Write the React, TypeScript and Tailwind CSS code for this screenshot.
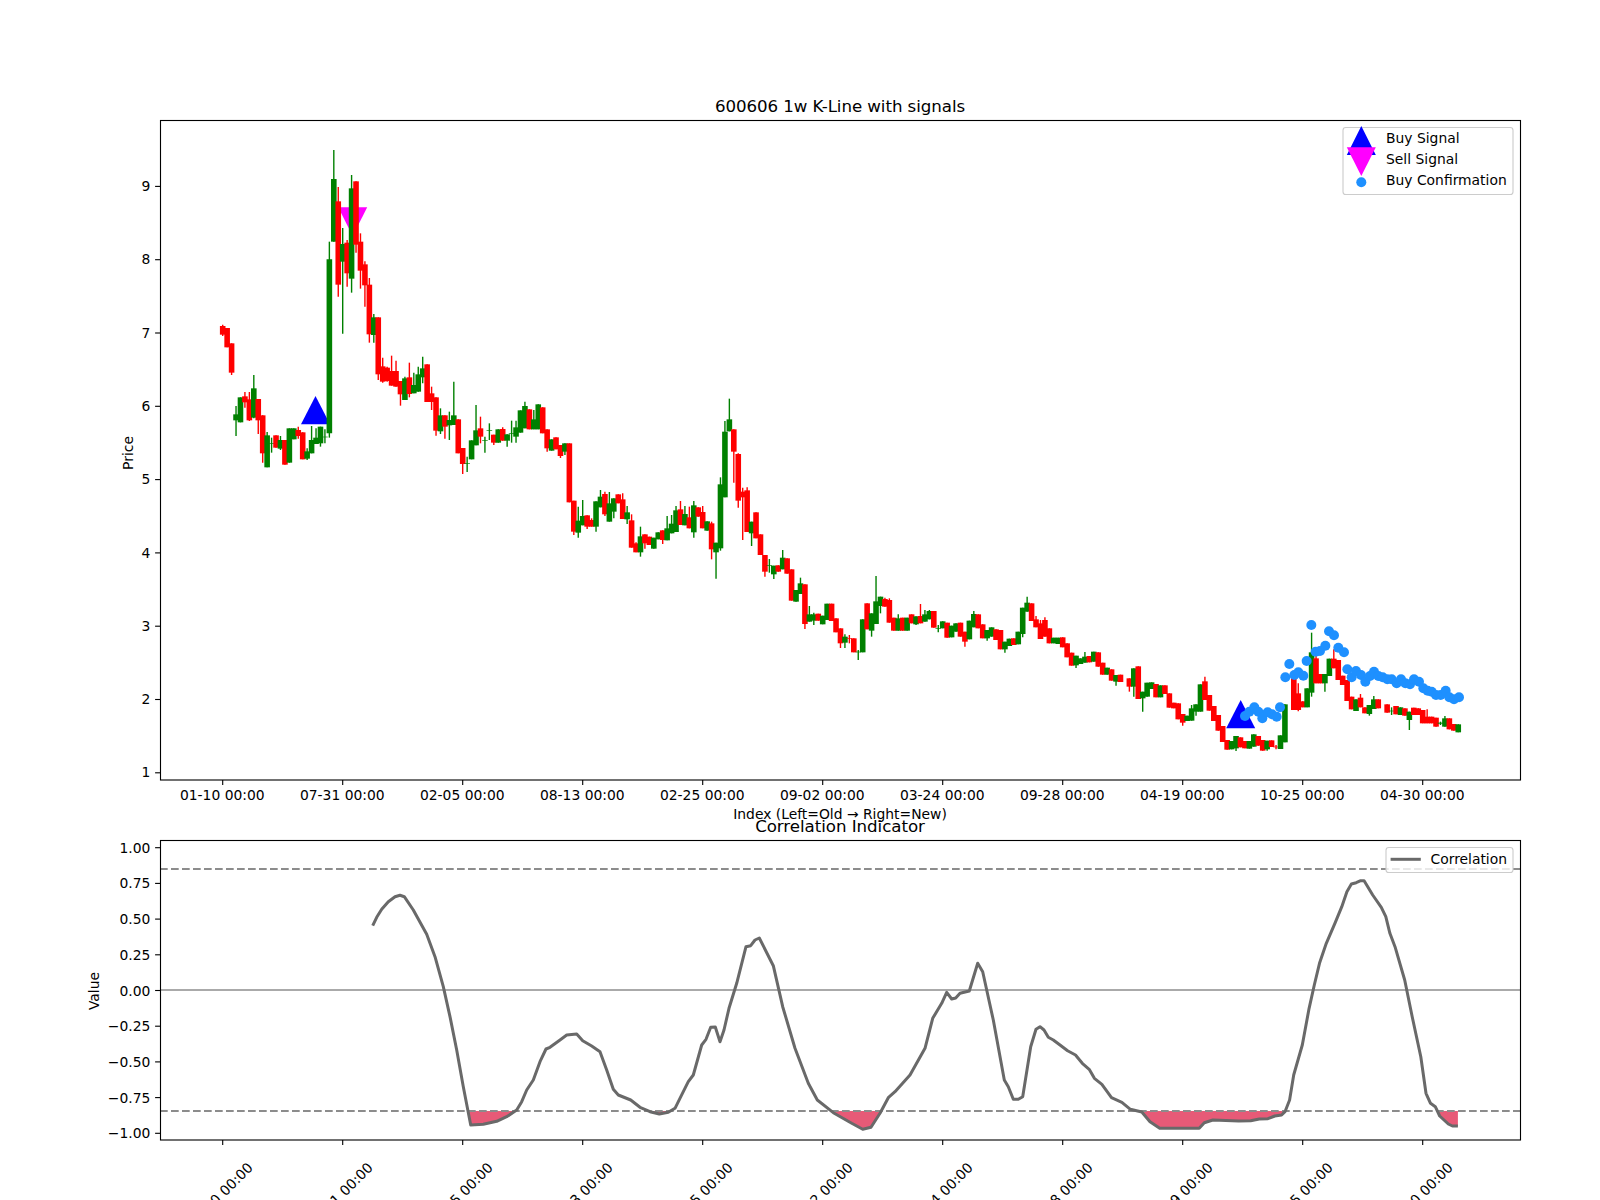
import * as React from "react"

type Candle = ["r" | "g", number, number, number?, number?] | null

const COLORS = { r: "#ff0000", g: "#008000" }
const X_LABELS = ["01-10", "07-31", "02-05", "08-13", "02-25", "09-02", "03-24", "09-28", "04-19", "10-25", "04-30"]
const PRICE_TICKS = [9, 8, 7, 6, 5, 4, 3, 2, 1]
const VALUE_TICKS = ["1.00", "0.75", "0.50", "0.25", "0.00", "−0.25", "−0.50", "−0.75", "−1.00"]

const tickX = (k: number) => 222.7 + 120 * k
const candleX = (i: number) => 222.7 + (i * 120) / 27
const priceY = (p: number) => 186.4 + (9 - p) * 73.3
const valueY = (v: number) => 990.5 - 142.8 * v

// Each block was sampled at 3x from a different window, so y = top + value / 3
const CANDLE_BLOCKS: { top: number; rows: Candle[] }[] = [
  {
    top: 90,
    rows: [
      ["r", 708, 734, 704, 738], ["r", 714, 772], ["r", 760, 848, 760, 855], ["g", 973, 991, 948, 1038],
      ["g", 922, 997], ["r", 919, 937, 906, 953], ["r", 928, 991, 906, 993], ["g", 895, 983, 855, 985],
      ["r", 927, 991, 927, 1032], ["r", 976, 1090, 976, 1118], ["g", 1036, 1132, 1026, 1132], ["g", 1060, 1062, 1043, 1088],
      ["r", 1036, 1073], ["g", 1050, 1076, 1038, 1080], ["r", 1050, 1124], ["g", 1015, 1118],
      ["g", 1015, 1048], ["r", 1020, 1038, 1010, 1046], ["r", 1027, 1108], ["g", 1084, 1106, 1075, 1110],
      ["g", 1050, 1090, 1008, 1090], ["g", 1043, 1062, 1015, 1062], ["g", 1010, 1060, 1010, 1070], ["g", 1040, 1042, 1018, 1060],
      ["g", 508, 1030, 455, 1043], ["g", 267, 455, 180, 455], ["r", 334, 584, 291, 620], ["g", 462, 515, 414, 731],
      ["r", 458, 550, 450, 590], ["g", 295, 566, 255, 608], ["r", 274, 464, 274, 488], ["r", 455, 542, 430, 596],
      ["r", 523, 586, 514, 650], ["r", 584, 733, 564, 758], ["g", 682, 735, 672, 758], ["r", 682, 853, 682, 870],
      ["r", 829, 875, 803, 878], ["r", 833, 873, 830, 875], ["r", 843, 887, 797, 887], ["r", 843, 890, 812, 890],
      ["r", 873, 913, 873, 947], ["g", 865, 930, 860, 930], ["r", 862, 912, 818, 922], ["g", 885, 910, 848, 910],
      ["g", 853, 905, 830, 905], ["g", 835, 862, 800, 880], ["r", 823, 936], ["r", 910, 936, 890, 960],
      ["r", 922, 1022, 922, 1037], ["g", 976, 1024, 955, 1032], ["r", 976, 1010, 976, 1046], ["g", 990, 1006, 965, 1050],
      ["g", 976, 1005, 875, 1005], ["r", 988, 1090], ["r", 1074, 1122, 1074, 1152], ["g", 1120, 1122, 1100, 1146],
      ["g", 1051, 1108], ["g", 1021, 1066, 945, 1066], ["r", 1015, 1040, 980, 1060], ["g", 1050, 1052, 1040, 1088],
      ["g", 1020, 1022, 1000, 1050], ["r", 1034, 1058, 1034, 1065], ["g", 1018, 1058], ["r", 1017, 1052, 1012, 1052],
      ["g", 1033, 1052, 1033, 1070], ["g", 1030, 1032, 992, 1058], ["g", 1012, 1040, 992, 1058], ["g", 961, 1028],
      ["g", 948, 1015, 935, 1015], ["r", 958, 1018], ["g", 988, 1018, 960, 1018], ["g", 943, 1018],
      ["r", 952, 1030], ["r", 1018, 1075, 1018, 1085],
    ],
  },
  {
    top: 380,
    rows: [
      ["g", 178, 212], ["r", 172, 208], ["r", 195, 228, 195, 234], ["g", 190, 215, 190, 225],
      ["r", 190, 367], ["r", 362, 455, 362, 465], ["g", 422, 458, 380, 473], ["g", 408, 436, 360, 436],
      ["r", 406, 440, 406, 447], ["r", 420, 440, 415, 440], ["g", 364, 440, 364, 455], ["g", 350, 382, 330, 382],
      ["r", 342, 403, 335, 408], ["g", 370, 425, 336, 425], ["g", 355, 395, 355, 415], ["r", 343, 370],
      ["r", 358, 417, 340, 417], ["g", 397, 418, 378, 432], ["r", 421, 503, 403, 503], ["r", 490, 517, 487, 517],
      ["g", 469, 517, 440, 530], ["r", 463, 490, 463, 506], ["r", 470, 495], ["g", 473, 506],
      ["g", 457, 478], ["r", 451, 480, 451, 492], ["g", 445, 481, 408, 481], ["g", 431, 460, 405, 460],
      ["g", 391, 456, 378, 456], ["r", 388, 435, 363, 435], ["g", 402, 436, 378, 436], ["r", 412, 445, 380, 445],
      ["g", 376, 457, 363, 473], ["r", 382, 410], ["r", 396, 445, 378, 445], ["g", 424, 452],
      ["r", 430, 508, 425, 538], ["g", 488, 517, 488, 596], ["g", 313, 505, 292, 512], ["g", 155, 352, 123, 352],
      ["g", 118, 154, 56, 154], ["r", 148, 215, 148, 308], ["r", 222, 362, 220, 383], ["r", 335, 352, 323, 480],
      ["r", 331, 456, 322, 456], ["g", 425, 460, 425, 498], ["r", 397, 475], ["r", 463, 525],
      ["r", 525, 575, 525, 590], ["g", 555, 557, 537, 578], ["g", 557, 583, 557, 597], ["r", 556, 575],
      ["g", 533, 568, 510, 568], ["r", 535, 581], ["r", 568, 662], ["g", 630, 665],
      ["g", 610, 642, 593, 642], ["r", 613, 732, 613, 747], ["g", 703, 725, 678, 725], ["g", 703, 722, 698, 735],
      ["r", 701, 722], ["g", 707, 733], ["g", 671, 720], ["r", 671, 723],
      ["r", 715, 757], ["r", 745, 790, 745, 804], ["g", 770, 788, 763, 804], ["r", 775, 777, 765, 790],
      ["r", 775, 817], ["g", 815, 817, 810, 840], ["g", 718, 817], ["r", 670, 748],
      ["g", 700, 752, 700, 770], ["g", 664, 732, 588, 732], ["g", 650, 678, 650, 700], ["r", 657, 680, 653, 680],
      ["r", 660, 728, 655, 728], ["r", 713, 752], ["g", 715, 752, 703, 752], ["r", 713, 752],
      ["g", 713, 752], ["r", 703, 730], ["g", 709, 733, 709, 735], ["r", 708, 730, 672, 730],
      ["g", 703, 725, 690, 725], ["g", 693, 718, 690, 718], ["r", 693, 743], ["g", 745, 747, 735, 757],
      ["g", 724, 745], ["r", 728, 773],
    ],
  },
  {
    top: 540,
    rows: [
      ["g", 257, 292], ["g", 250, 275], ["r", 248, 290], ["r", 275, 305, 275, 320],
      ["g", 242, 298], ["g", 222, 262, 213, 262], ["r", 223, 265], ["r", 253, 295],
      ["g", 270, 295, 270, 302], ["g", 262, 290], ["r", 268, 300], ["r", 270, 328],
      ["g", 305, 328, 305, 338], ["g", 296, 318], ["r", 295, 315], ["g", 275, 313],
      ["g", 203, 282, 203, 292], ["g", 188, 215, 170, 215], ["r", 190, 243], ["r", 238, 262, 228, 262],
      ["r", 250, 297, 240, 297], ["r", 240, 290, 232, 290], ["r", 265, 310], ["g", 293, 310],
      ["g", 293, 312], ["r", 292, 322], ["r", 310, 352], ["r", 338, 377],
      ["g", 347, 376, 347, 384], ["g", 355, 372], ["g", 350, 368, 336, 368], ["r", 348, 367],
      ["g", 335, 365], ["r", 337, 380], ["r", 368, 404], ["g", 383, 404],
      ["r", 388, 422], ["g", 405, 425, 405, 437], ["r", 404, 426], null,
      ["r", 415, 440, 415, 455], ["g", 385, 440, 385, 470], ["r", 379, 477], ["g", 455, 475, 455, 515],
      ["g", 428, 470], ["g", 427, 447], ["r", 432, 472], ["g", 436, 472],
      ["r", 436, 462], ["r", 460, 503], ["r", 488, 505], ["r", 490, 538],
      ["r", 522, 548, 522, 557], ["g", 527, 543], ["g", 505, 542, 495, 542], ["g", 493, 515, 493, 527],
      ["g", 433, 515], ["r", 424, 480, 410, 480], ["r", 465, 512], ["r", 498, 543],
      ["r", 525, 572], ["r", 558, 606], ["r", 600, 629], ["g", 603, 628],
      ["g", 588, 625, 588, 633], ["r", 592, 622], ["r", 603, 625], ["g", 603, 626],
      ["g", 583, 620], ["r", 588, 617], ["r", 600, 632], ["g", 602, 628, 602, 632],
      ["r", 601, 621], ["r", 620, 622, 615, 628], ["g", 586, 627], ["g", 493, 607],
      null,
    ],
  },
  {
    top: 600,
    rows: [
      ["r", 226, 330], ["r", 280, 330, 250, 334], ["r", 304, 322], ["g", 265, 322],
      ["g", 157, 278, 98, 290], ["r", 175, 250, 165, 250], ["r", 222, 250], ["g", 222, 250, 222, 275],
      ["g", 176, 228], ["r", 176, 205, 148, 205], ["r", 180, 240], ["r", 227, 255],
      ["r", 240, 303], ["r", 290, 328], ["g", 298, 333], ["r", 293, 322, 282, 322],
      ["r", 322, 340], ["g", 315, 342, 315, 347], ["g", 298, 327, 288, 327], ["r", 298, 325],
      null, ["r", 313, 338], ["g", 332, 334, 322, 345], ["r", 318, 343],
      ["g", 322, 345], ["r", 325, 347], ["g", 335, 360, 335, 390], ["r", 323, 345],
      ["r", 325, 345], ["r", 330, 370], ["r", 350, 370, 328, 370], ["r", 350, 370],
      ["r", 353, 380], ["g", 368, 371, 365, 375], ["g", 355, 380, 348, 380], ["r", 355, 388],
      ["r", 372, 392], ["g", 373, 397],
    ],
  },
]

const CANDLES = CANDLE_BLOCKS.flatMap((block) =>
  block.rows.map((row) => {
    if (!row) return null
    const [kind, bodyTop, bodyBottom, high = bodyTop, low = bodyBottom] = row
    return {
      color: COLORS[kind],
      bodyTop: block.top + bodyTop / 3,
      bodyBottom: block.top + bodyBottom / 3,
      high: block.top + high / 3,
      low: block.top + low / 3,
    }
  })
)

const CONFIRMATIONS = [
  [135, 348], [148, 335], [163, 322], [175, 335], [187, 355], [203, 337], [216, 343], [230, 350], [240, 322],
  [256, 232], [268, 192], [283, 225], [295, 217], [310, 227], [320, 183], [334, 75], [347, 155], [360, 153],
  [376, 137], [387, 94], [402, 106], [415, 143], [432, 157], [442, 208], [455, 232], [468, 213], [483, 225],
  [496, 245], [510, 228], [522, 215], [535, 228], [548, 232], [562, 238], [575, 238], [590, 250], [603, 238],
  [616, 250], [630, 253], [642, 238], [657, 245], [670, 265], [683, 272], [695, 275], [708, 285], [722, 285],
  [737, 272], [748, 292], [762, 298], [777, 292],
].map(([x, y]) => [1200 + x / 3, 600 + y / 3])

const CORRELATION = [
  [372.7, 925.7], [376.7, 917.3], [381.7, 909.3], [388.3, 901.7], [395, 896.7], [400, 895.3], [404.3, 896.7], [413.3, 910],
  [426.7, 934.3], [435, 956.7], [443.3, 986.7], [450, 1016.7], [456.7, 1050], [463.3, 1086.7], [470.7, 1125], [483.3, 1124.3],
  [496.7, 1121.3], [506.7, 1116.7], [516.7, 1110], [521.7, 1101.7], [526.7, 1090], [533.3, 1080], [540, 1061.7], [546, 1049],
  [550, 1047.3], [560, 1040], [566.7, 1035], [576.7, 1034], [582.7, 1040.7], [591.7, 1046], [600, 1051.7], [606.7, 1070],
  [613.3, 1089.3], [618.3, 1095], [630.7, 1100], [640, 1107.3], [650, 1111.7], [659.3, 1114], [668.3, 1112.3], [675, 1108.3],
  [683.3, 1091.7], [688.3, 1081.7], [693.3, 1075], [701.7, 1045], [706, 1039.3], [710.7, 1027.3], [715.3, 1027], [720, 1041.7],
  [724, 1030], [729, 1008.3], [736.7, 983.3], [746, 946.7], [750.7, 945.7], [755, 940], [759.3, 938], [773.3, 965.7],
  [782.7, 1006.7], [795, 1048.3], [808.3, 1083.3], [817.3, 1100], [833.3, 1112.7], [851.7, 1123.3], [862.7, 1129.3], [871, 1127.3],
  [880, 1113.3], [888.3, 1097.7], [895, 1091.7], [910, 1075], [925, 1048.3], [932.7, 1018.3], [941.7, 1003.3], [946.7, 992.3],
  [951.7, 999], [955.7, 998], [960, 993.3], [969.3, 991], [977.7, 963.3], [982.7, 971.7], [993.3, 1020], [1004.3, 1080],
  [1008.3, 1086.7], [1013.3, 1099.3], [1018.3, 1099.3], [1022.7, 1096.7], [1030.7, 1046.7], [1036, 1029.3], [1040, 1026.7], [1044, 1030],
  [1048.3, 1037.3], [1053.3, 1040], [1060, 1045], [1067.6, 1050.7], [1075.5, 1055], [1082.3, 1063.3], [1089.2, 1069.3], [1094.4, 1078.3],
  [1101.9, 1084.3], [1111.5, 1097.7], [1121.9, 1102.3], [1130.4, 1109.3], [1141.8, 1112], [1150, 1121.7], [1159.7, 1128.3], [1199.2, 1128.3],
  [1204.3, 1122.7], [1212.9, 1120], [1238.7, 1121], [1250.7, 1120.7], [1259.3, 1119], [1267.9, 1118.7], [1274.8, 1116], [1281.6, 1115],
  [1285, 1111.7], [1289.6, 1100], [1293.7, 1075], [1302.3, 1045], [1309.1, 1008.3], [1314.3, 985], [1319.5, 963.3], [1326.3, 943.3],
  [1334.9, 923.3], [1341.8, 906.7], [1346.9, 891.7], [1351.4, 884], [1356.2, 882.7], [1360.7, 880.7], [1364.1, 880.7], [1372.7, 895],
  [1381.3, 907.3], [1385.8, 916.7], [1389.9, 933.3], [1395, 946.7], [1404.7, 980], [1412.2, 1016.7], [1420.8, 1056.7], [1426, 1093.3],
  [1430.5, 1103.3], [1435.3, 1106.7], [1439.7, 1116], [1448.3, 1124], [1452.4, 1126], [1457.9, 1126],
]

const linePoints = CORRELATION.map(([x, y]) => `${x},${y}`).join(" ")

function Triangle({ x, base, tip, fill }: { x: number; base: number; tip: number; fill: string }) {
  return <polygon points={`${x - 14.5},${base} ${x + 14.5},${base} ${x},${tip}`} fill={fill} />
}

function Frame({ top, bottom }: { top: number; bottom: number }) {
  return <rect x={160.5} y={top} width={1360} height={bottom - top} fill="none" stroke="#000" strokeWidth={1.11} />
}

function PriceChart() {
  return (
    <svg viewBox="0 120 1600 660" className="h-[660px] w-[1600px] shrink-0 overflow-visible">
      <Triangle x={315.5} base={424.3} tip={396} fill="#0000ff" />
      <Triangle x={1240.7} base={728.3} tip={700} fill="#0000ff" />
      <Triangle x={352.7} base={207.3} tip={236} fill="#ff00ff" />

      {CANDLES.map((candle, i) =>
        candle ? (
          <g key={i} stroke={candle.color}>
            <line x1={candleX(i)} x2={candleX(i)} y1={candle.high} y2={candle.low} strokeWidth={1.4} />
            <line x1={candleX(i)} x2={candleX(i)} y1={candle.bodyTop} y2={candle.bodyBottom} strokeWidth={5.6} />
          </g>
        ) : null
      )}

      {CONFIRMATIONS.map(([x, y], i) => (
        <circle key={i} cx={x} cy={y} r={5} fill="#1e90ff" />
      ))}

      <Frame top={120.5} bottom={780} />

      {PRICE_TICKS.map((p) => (
        <g key={p}>
          <line x1={155.1} x2={160} y1={priceY(p)} y2={priceY(p)} stroke="#000" strokeWidth={1.11} />
          <text x={150.3} y={priceY(p) + 4.6} textAnchor="end" className="text-[13.89px]">{p}</text>
        </g>
      ))}
      {X_LABELS.map((label, k) => (
        <g key={label}>
          <line x1={tickX(k)} x2={tickX(k)} y1={780} y2={785} stroke="#000" strokeWidth={1.11} />
          <text x={tickX(k) - 0.4} y={800.4} textAnchor="middle" className="text-[13.89px]">{label} 00:00</text>
        </g>
      ))}
      <text x={840} y={819} textAnchor="middle" className="text-[13.89px]">Index (Left=Old → Right=New)</text>
      <text transform="translate(132.5 453) rotate(-90)" textAnchor="middle" className="text-[13.89px]">Price</text>

      <rect x={1343} y={127.5} width={170} height={67} rx={2.8} fill="#fff" fillOpacity={0.8} stroke="#cccccc" strokeWidth={1.11} />
      <Triangle x={1361.3} base={155} tip={126} fill="#0000ff" />
      <Triangle x={1361.3} base={147.3} tip={176} fill="#ff00ff" />
      <circle cx={1361.3} cy={182.3} r={5} fill="#1e90ff" />
      <text x={1386} y={143} className="text-[13.89px]">Buy Signal</text>
      <text x={1386} y={164} className="text-[13.89px]">Sell Signal</text>
      <text x={1386} y={185} className="text-[13.89px]">Buy Confirmation</text>
    </svg>
  )
}

function CorrelationChart() {
  return (
    <svg viewBox="0 840 1600 360" className="h-[360px] w-[1600px] shrink-0 overflow-visible">
      <defs>
        <clipPath id="oversold">
          <rect x={160} y={1111} width={1360} height={30} />
        </clipPath>
      </defs>
      <polygon points={`${linePoints} 1457.9,1111 372.7,1111`} fill="#e75a77" clipPath="url(#oversold)" />
      <line x1={160} x2={1520} y1={869} y2={869} stroke="#8c8c8c" strokeWidth={2.08} strokeDasharray="7.7 3.3" />
      <line x1={160} x2={1520} y1={1111} y2={1111} stroke="#8c8c8c" strokeWidth={2.08} strokeDasharray="7.7 3.3" />
      <line x1={160} x2={1520} y1={990} y2={990} stroke="#aaaaaa" strokeWidth={2.08} />
      <polyline points={linePoints} fill="none" stroke="#696969" strokeWidth={3} strokeLinejoin="round" />

      <Frame top={840.5} bottom={1140} />

      {VALUE_TICKS.map((label, i) => {
        const y = valueY(1 - i * 0.25)
        return (
          <g key={label}>
            <line x1={155.1} x2={160} y1={y} y2={y} stroke="#000" strokeWidth={1.11} />
            <text x={150.3} y={y + 5} textAnchor="end" className="text-[13.89px]">{label}</text>
          </g>
        )
      })}
      {X_LABELS.map((label, k) => (
        <g key={label}>
          <line x1={tickX(k)} x2={tickX(k)} y1={1140} y2={1145} stroke="#000" strokeWidth={1.11} />
          <text transform={`translate(${tickX(k) - 2.5} 1195) rotate(-45)`} y={5} textAnchor="middle" className="text-[13.89px]">{label} 00:00</text>
        </g>
      ))}
      <text transform="translate(98.5 991) rotate(-90)" textAnchor="middle" className="text-[13.89px]">Value</text>

      <rect x={1386} y={847.5} width={127} height={25} rx={2.8} fill="#fff" fillOpacity={0.8} stroke="#cccccc" strokeWidth={1.11} />
      <line x1={1390.6} x2={1420.8} y1={859.3} y2={859.3} stroke="#696969" strokeWidth={3} />
      <text x={1430.5} y={863.8} className="text-[13.89px]">Correlation</text>
    </svg>
  )
}

export default function App() {
  return (
    <div className="flex h-[1200px] w-[1600px] flex-col overflow-hidden bg-white font-['DejaVu_Sans',sans-serif] text-black">
      <h1 className="ml-[160px] mt-[97px] h-[23px] w-[1360px] text-center text-[16.67px] leading-[20px] font-normal tracking-[-0.07px]">
        600606 1w K-Line with signals
      </h1>
      <PriceChart />
      <h2 className="relative ml-[160px] mt-[37px] h-[23px] w-[1360px] text-center text-[16.67px] leading-[20px] font-normal tracking-[-0.05px]">
        Correlation Indicator
      </h2>
      <CorrelationChart />
    </div>
  )
}
